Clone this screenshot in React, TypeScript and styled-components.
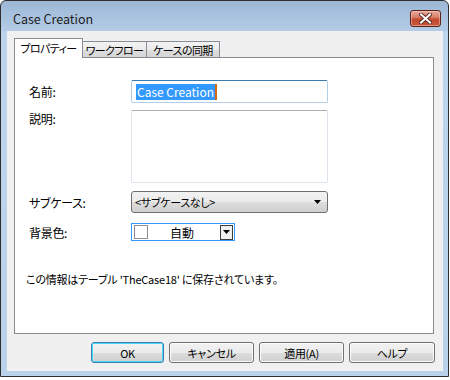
import React from 'react';
import styled, { createGlobalStyle } from 'styled-components';

const GlobalStyle = createGlobalStyle`
  html, body {
    margin: 0;
    padding: 0;
    background: #ffffff;
  }
  body {
    font-family: "Noto Sans CJK JP", "Liberation Sans", sans-serif;
    font-size: 12px;
    color: #000;
  }
`;

const uiFont = `"Noto Sans CJK JP", "Liberation Sans", sans-serif`;

const Window = styled.div`
  width: 449px;
  height: 377px;
  box-sizing: border-box;
  border: 1px solid #2e2e2e;
  border-radius: 6px 6px 0 0;
  background: linear-gradient(to bottom, #9cb8d6 0px, #b4cce6 30px, #bcd4ec 31px, #b9d1ea 100%);
  display: flex;
  flex-direction: column;
  overflow: hidden;
`;

const TitleBar = styled.div`
  height: 30px;
  flex: none;
  display: flex;
  align-items: center;
  justify-content: space-between;
  padding: 4px 7px 0 12px;
  box-sizing: border-box;
`;

const Title = styled.span`
  font-family: ${uiFont};
  font-size: 12.5px;
  color: #1b1b1b;
`;

const CloseButton = styled.div`
  width: 29px;
  height: 15px;
  border: 1px solid #5a2418;
  border-radius: 3px;
  background: linear-gradient(to bottom, #e6a898 0%, #d9826c 40%, #c24a30 55%, #c9553a 100%);
  box-shadow: inset 0 0 0 1px rgba(255, 220, 210, 0.45);
  display: flex;
  align-items: center;
  justify-content: center;
`;

const Client = styled.div`
  flex: 1;
  margin: 0 5px 5px 6px;
  background: #f0f0f0;
  display: flex;
  flex-direction: column;
  padding: 7px 7px 0 7px;
`;

const TabStrip = styled.div`
  display: flex;
  align-items: flex-end;
  height: 20px;
  margin-bottom: -1px;
`;

const Tab = styled.div<{ $active?: boolean; $w: number }>`
  box-sizing: border-box;
  width: ${p => p.$w}px;
  height: ${p => (p.$active ? 20 : 16)}px;
  margin-bottom: ${p => (p.$active ? 0 : 1)}px;
  margin-left: ${p => (p.$active ? 0 : -1)}px;
  border: 1px solid #898c95;
  border-bottom: none;
  background: ${p => (p.$active ? '#ffffff' : 'linear-gradient(to bottom, #f3f3f3 0%, #ebebeb 50%, #dddddd 51%, #d6d6d6 100%)')};
  position: relative;
  z-index: ${p => (p.$active ? 2 : 1)};
  display: flex;
  align-items: center;
  justify-content: center;
  font-family: ${uiFont};
  font-size: 11px;
  letter-spacing: -0.6px;
  font-feature-settings: "palt";
  line-height: 1;
  padding-top: ${p => (p.$active ? 0 : 1)}px;
  white-space: nowrap;
`;

const Panel = styled.div`
  box-sizing: border-box;
  width: 420px;
  height: 277px;
  border: 1px solid #898c95;
  background: #ffffff;
  padding: 22px 0 0 14px;
  display: flex;
  flex-direction: column;
  position: relative;
  z-index: 1;
`;

const Row = styled.div<{ $gap: number; $top?: boolean }>`
  display: flex;
  align-items: ${p => (p.$top ? 'flex-start' : 'center')};
  margin-bottom: ${p => p.$gap}px;
`;

const Label = styled.div`
  width: 102px;
  flex: none;
  font-family: ${uiFont};
  font-size: 12px;
  font-feature-settings: "palt";
  letter-spacing: -0.3px;
`;

const TextBox = styled.div`
  box-sizing: border-box;
  width: 197px;
  height: 23px;
  border: 1px solid #b5cfe7;
  border-top-color: #3d7bad;
  border-radius: 2px;
  background: #fff;
  display: flex;
  align-items: center;
  padding-left: 4px;
`;

const Selected = styled.span`
  background: #3399ff;
  color: #ffffff;
  font-family: ${uiFont};
  font-size: 12px;
  line-height: 16px;
  padding: 0 1px;
  border-right: 2px solid #d46a12;
`;

const TextArea = styled.div`
  box-sizing: border-box;
  width: 197px;
  height: 73px;
  border: 1px solid #dde3ea;
  border-top-color: #abadb3;
  border-radius: 2px;
  background: #fff;
`;

const Select = styled.div`
  box-sizing: border-box;
  width: 197px;
  height: 22px;
  border: 1px solid #707070;
  border-radius: 3px;
  background: linear-gradient(to bottom, #f2f2f2 0%, #ebebeb 50%, #dddddd 51%, #cfcfcf 100%);
  display: flex;
  align-items: center;
  justify-content: space-between;
  padding: 0 6px 0 3px;
  font-family: ${uiFont};
  font-size: 11px;
  letter-spacing: -0.3px;
  font-feature-settings: "palt";
`;

const ColorPicker = styled.div`
  box-sizing: border-box;
  width: 104px;
  height: 18px;
  border: 1px solid #3399ff;
  background: #fff;
  display: flex;
  align-items: center;
  padding: 0 1px 0 2px;
`;

const Swatch = styled.div`
  box-sizing: border-box;
  width: 14px;
  height: 14px;
  border: 1px solid #8f8f8f;
  background: #fff;
  flex: none;
`;

const ColorName = styled.div`
  flex: 1;
  text-align: center;
  font-family: ${uiFont};
  font-size: 12px;
  padding-right: 4px;
`;

const DropButton = styled.div`
  box-sizing: border-box;
  width: 13px;
  height: 15px;
  border: 1px solid #3c3c3c;
  background: #f0f0f0;
  display: flex;
  align-items: center;
  justify-content: center;
  flex: none;
`;

const Note = styled.div`
  margin-top: 30px;
  margin-left: -3px;
  font-family: ${uiFont};
  font-size: 11px;
  letter-spacing: -0.2px;
  font-feature-settings: "palt";
`;

const ButtonBar = styled.div`
  display: flex;
  gap: 5px;
  margin-top: 8px;
  padding-left: 77px;
`;

const Button = styled.div<{ $w: number; $default?: boolean }>`
  box-sizing: border-box;
  width: ${p => p.$w}px;
  height: 21px;
  border: 1px solid ${p => (p.$default ? '#3c7fb1' : '#707070')};
  border-radius: 3px;
  background: linear-gradient(to bottom, #f2f2f2 0%, #ebebeb 50%, #dddddd 51%, #cfcfcf 100%);
  box-shadow: ${p => (p.$default ? 'inset 0 0 0 1px #48d8f8' : 'inset 0 0 0 1px #fcfcfc')};
  display: flex;
  align-items: center;
  justify-content: center;
  font-family: ${uiFont};
  font-size: 11px;
  letter-spacing: -0.3px;
  font-feature-settings: "palt";
`;

const Arrow = () => (
  <svg width="7" height="4" viewBox="0 0 7 4">
    <path d="M0 0h7L3.5 4z" fill="#000" />
  </svg>
);

const CloseIcon = () => (
  <svg width="13" height="11" viewBox="0 0 13 11">
    <path d="M2 1.5l9 8M11 1.5l-9 8" stroke="#5b2a20" strokeWidth="4" strokeLinecap="square" />
    <path d="M2 1.5l9 8M11 1.5l-9 8" stroke="#ffffff" strokeWidth="2" strokeLinecap="square" />
  </svg>
);

export default function App() {
  return (
    <>
      <GlobalStyle />
      <Window>
        <TitleBar>
          <Title>Case Creation</Title>
          <CloseButton>
            <CloseIcon />
          </CloseButton>
        </TitleBar>
        <Client>
          <TabStrip>
            <Tab $active $w={69}>プロパティー</Tab>
            <Tab $w={65}>ワークフロー</Tab>
            <Tab $w={74}>ケースの同期</Tab>
          </TabStrip>
          <Panel>
            <Row $gap={7}>
              <Label>名前:</Label>
              <TextBox>
                <Selected>Case Creation</Selected>
              </TextBox>
            </Row>
            <Row $gap={8} $top>
              <Label>説明:</Label>
              <TextArea />
            </Row>
            <Row $gap={10}>
              <Label>サブケース:</Label>
              <Select>
                <span>&lt;サブケースなし&gt;</span>
                <Arrow />
              </Select>
            </Row>
            <Row $gap={0}>
              <Label>背景色:</Label>
              <ColorPicker>
                <Swatch />
                <ColorName>自動</ColorName>
                <DropButton>
                  <Arrow />
                </DropButton>
              </ColorPicker>
            </Row>
            <Note>この情報はテーブル 'TheCase18' に保存されています。</Note>
          </Panel>
          <ButtonBar>
            <Button $w={73} $default>OK</Button>
            <Button $w={85}>キャンセル</Button>
            <Button $w={85}>適用(A)</Button>
            <Button $w={86}>ヘルプ</Button>
          </ButtonBar>
        </Client>
      </Window>
    </>
  );
}
